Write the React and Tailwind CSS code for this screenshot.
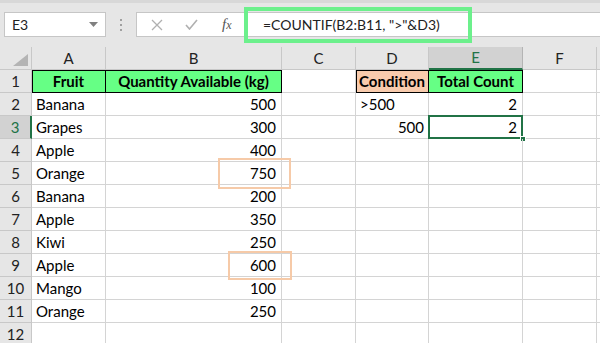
import React from "react";

const COLS = ["A", "B", "C", "D", "E", "F"];
const rows = [
  ["Banana", "500", "", ">500", "2"],
  ["Grapes", "300", "", "500", "2"],
  ["Apple", "400"],
  ["Orange", "750"],
  ["Banana", "200"],
  ["Apple", "350"],
  ["Kiwi", "250"],
  ["Apple", "600"],
  ["Mango", "100"],
  ["Orange", "250"],
  [],
];

const font = { fontFamily: "Lato, 'Noto Sans', sans-serif" };

function Cell({ children, className = "" }) {
  return (
    <div className={`h-[23px] border-r border-b border-[#d4d4d4] flex items-center text-[15px] text-black overflow-visible whitespace-nowrap ${className}`}>
      {children}
    </div>
  );
}

export default function App() {
  return (
    <div className="relative w-[600px] h-[343px] overflow-hidden bg-white" style={font}>
      {/* toolbar / formula bar */}
      <div className="h-[47px] bg-[#e6e6e6] border-t-[3px] border-[#d8d8d8] flex items-start pt-[9px]">
        <div className="ml-[4px] w-[102px] h-[25px] bg-white border border-[#c6c6c6] flex items-center justify-between px-[7px]">
          <span className="text-[14px] text-[#222]">E3</span>
          <svg width="9" height="5" viewBox="0 0 9 5"><path d="M0 0h9L4.5 5z" fill="#808080" /></svg>
        </div>
        <div className="w-[30px] h-[25px] flex flex-col items-center justify-center gap-[3px]">
          <span className="w-[2px] h-[2px] bg-[#a0a0a0]" />
          <span className="w-[2px] h-[2px] bg-[#a0a0a0]" />
          <span className="w-[2px] h-[2px] bg-[#a0a0a0]" />
        </div>
        <div className="w-[109px] h-[25px] bg-white border border-[#c6c6c6] border-r-0 flex items-center">
          <svg className="ml-[14px]" width="12" height="12" viewBox="0 0 12 12"><path d="M1 1L11 11M11 1L1 11" stroke="#b0b0b0" strokeWidth="1.3" /></svg>
          <svg className="ml-[22px]" width="13" height="11" viewBox="0 0 13 11"><path d="M1 6L4.5 10L12 1" stroke="#b0b0b0" strokeWidth="1.6" fill="none" /></svg>
          <span className="ml-[24px] text-[15px] italic text-[#555]" style={{ fontFamily: "'Liberation Serif', serif" }}>
            f<span className="text-[12px]">x</span>
          </span>
        </div>
        <div className="flex-1 h-[25px] bg-white border border-[#c6c6c6] border-r-0 flex items-center pl-[17px]">
          <span className="text-[14px] text-[#222]">=COUNTIF(B2:B11, "&gt;"&amp;D3)</span>
        </div>
      </div>

      {/* grid */}
      <div className="grid grid-cols-[32px_74px_176px_74px_73px_94px_74px_1fr]">
        {/* column header row */}
        <div className="relative h-[23px] bg-[#e6e6e6] border-r border-b border-[#c8c8c8]">
          <svg className="absolute right-[3px] bottom-[3px]" width="15" height="12" viewBox="0 0 15 12"><path d="M15 0V12H0z" fill="#b4b4b4" /></svg>
        </div>
        {COLS.map((c) => (
          <div
            key={c}
            className={`h-[23px] flex items-center justify-center text-[15px] border-r ${
              c === "E"
                ? "bg-[#d2d2d2] text-[#217346] border-b-2 border-b-[#217346] border-r-[#b4b4b4]"
                : "bg-[#e6e6e6] text-[#222] border-b border-[#c8c8c8]"
            }`}
          >
            {c}
          </div>
        ))}
        <div className="h-[23px] bg-[#e6e6e6] border-b border-[#c8c8c8]" />

        {/* row 1 */}
        <div className="h-[23px] bg-[#e6e6e6] border-r border-b border-[#c8c8c8] flex items-center justify-center text-[15px] text-[#222]">1</div>
        <Cell className="bg-[#66ff85] border-r-black border-b-black justify-center font-bold shadow-[inset_0_1px_0_#000,inset_1px_0_0_#000]">Fruit</Cell>
        <Cell className="bg-[#66ff85] border-r-black border-b-black justify-center font-bold shadow-[inset_0_1px_0_#000]">Quantity Available (kg)</Cell>
        <Cell />
        <Cell className="bg-[#f8cbad] border-r-black border-b-black justify-center font-bold shadow-[inset_0_1px_0_#000,inset_1px_0_0_#000]">Condition</Cell>
        <Cell className="bg-[#66ff85] border-r-black border-b-black justify-center font-bold shadow-[inset_0_1px_0_#000]">Total Count</Cell>
        <Cell />
        <Cell className="border-r-0" />

        {rows.map((r, i) => {
          const n = i + 2;
          const sel = n === 3;
          return (
            <React.Fragment key={n}>
              <div
                className={`h-[23px] flex items-center justify-center text-[15px] border-b border-[#c8c8c8] ${
                  sel ? "bg-[#d2d2d2] text-[#217346] border-r-2 border-r-[#217346]" : "bg-[#e6e6e6] text-[#222] border-r"
                }`}
              >
                {n}
              </div>
              <Cell className="pl-[4px]">{r[0]}</Cell>
              <Cell className="justify-end pr-[5px]">{r[1]}</Cell>
              <Cell />
              <Cell className={n === 2 ? "pl-[4px]" : "justify-end pr-[4px]"}>{r[3]}</Cell>
              <Cell className="relative justify-end pr-[5px]">
                {r[4]}
                {sel && (
                  <>
                    <div className="absolute left-[-1px] top-[-1px] right-[-1px] bottom-[-1px] border-2 border-[#217346] pointer-events-none" />
                    <div className="absolute right-[-4px] bottom-[-4px] w-[6px] h-[6px] bg-[#217346] border border-white" />
                  </>
                )}
              </Cell>
              <Cell />
              <Cell className="border-r-0" />
            </React.Fragment>
          );
        })}
      </div>

      {/* annotation overlays */}
      <div className="absolute left-[244px] top-[7px] w-[228px] h-[36px] border-4 border-[#6cf08c] pointer-events-none" />
      <div className="absolute left-[218px] top-[158px] w-[73px] h-[31px] border-2 border-[#f6caa8] pointer-events-none" />
      <div className="absolute left-[228px] top-[251px] w-[64px] h-[29px] border-2 border-[#f6caa8] pointer-events-none" />
    </div>
  );
}
